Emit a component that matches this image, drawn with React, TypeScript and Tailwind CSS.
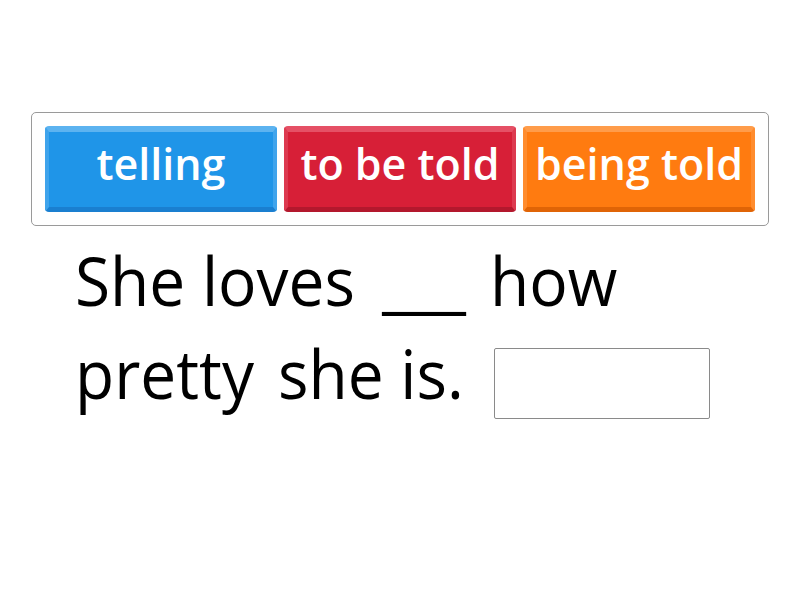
const choices = [
  {
    label: "telling",
    face: "bg-[#1f95e8]",
    edge: "border-t-[#5cb3f0] border-x-[#3fa4ec] border-b-[#1a7fd0]",
  },
  {
    label: "to be told",
    face: "bg-[#d71f37]",
    edge: "border-t-[#e55065] border-x-[#dd3a50] border-b-[#b3182d]",
  },
  {
    label: "being told",
    face: "bg-[#ff7b10]",
    edge: "border-t-[#ff9c4a] border-x-[#ff8c2e] border-b-[#e06406]",
  },
];

const sentence = ["She loves", "___", "how", "pretty", "she is."];

export default function App() {
  return (
    <div className="w-[800px] h-[600px] bg-white font-['Open_Sans',sans-serif] pt-[112px]">
      <div className="mx-[31px] border border-[#9a9a9a] rounded-[5px] p-[13px] flex gap-[7px]">
        {choices.map((c) => (
          <div
            key={c.label}
            className={`flex-1 h-[86px] pb-[12px] rounded-[4px] border-t-[6px] border-x-[4px] border-b-[5px] ${c.face} ${c.edge} flex items-center justify-center text-white text-[43px] font-semibold leading-none whitespace-nowrap`}
          >
            {c.label}
          </div>
        ))}
      </div>

      <div className="mt-[9px] pl-[75px] pr-[60px] flex flex-wrap items-start gap-x-[24px] text-[64px] leading-[93px] text-black">
        {sentence.map((w, i) => (
          <span
            key={i}
            className={`whitespace-nowrap scale-y-[1.07] origin-[50%_77%] ${i === 1 ? "ml-[3px]" : ""}`}
          >
            {w}
          </span>
        ))}
        <div className="ml-[6px] mt-[20px] w-[216px] h-[71px] border border-[#8a8a8a] rounded-[2px]" />
      </div>
    </div>
  );
}
